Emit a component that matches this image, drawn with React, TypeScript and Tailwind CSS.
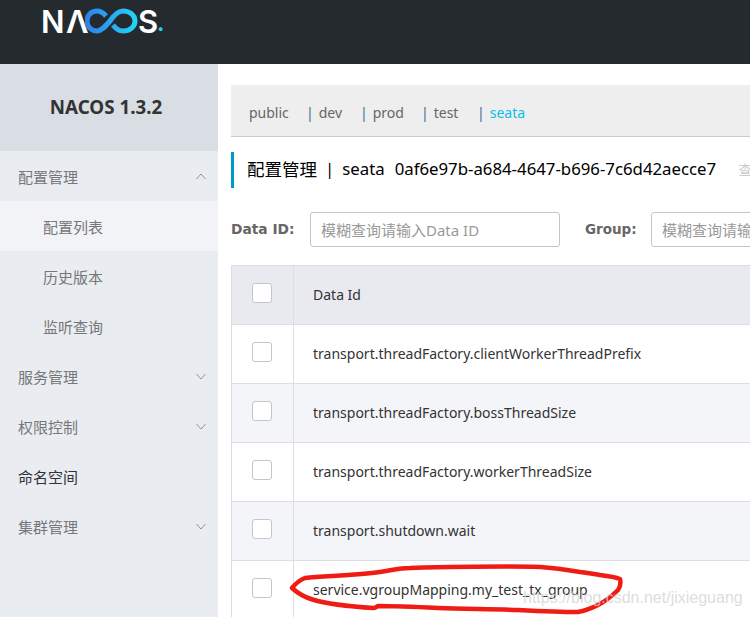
const latin = "font-['Noto_Sans','Noto_Sans_CJK_SC',sans-serif]";

const menu = [
  { label: "服务管理", arrow: true },
  { label: "权限控制", arrow: true },
  { label: "命名空间", arrow: false },
  { label: "集群管理", arrow: true },
];

const subMenu = ["配置列表", "历史版本", "监听查询"];

const tabs = [
  { name: "public", w: "w-[57px]" },
  { name: "dev", w: "w-[54px]" },
  { name: "prod", w: "w-[61px]" },
  { name: "test", w: "w-[56px]" },
];

const rows = [
  "transport.threadFactory.clientWorkerThreadPrefix",
  "transport.threadFactory.bossThreadSize",
  "transport.threadFactory.workerThreadSize",
  "transport.shutdown.wait",
  "service.vgroupMapping.my_test_tx_group",
];

const Chevron = ({ up = false }: { up?: boolean }) => (
  <svg width="10" height="7" viewBox="0 0 10 7" fill="none" stroke="#8d939b" strokeWidth="1" className="mb-[2px]">
    <path d={up ? "M.5 6L5 1l4.500 5" : "M.5 1L5 6l4.500-5"} />
  </svg>
);

const Logo = () => (
  <div className="flex items-center h-[24px] text-white font-['Inter',sans-serif] font-semibold text-[31px] leading-none">
    <span className="w-[25px]">N</span>
    <span className="w-[19px]">Λ</span>
    <svg width="53" height="26" viewBox="0 0 53 26" fill="none" strokeWidth="5" className="shrink-0">
      <defs>
        <linearGradient id="nacos-loop" x1="0" x2="1" y1="0" y2="0">
          <stop offset="0" stopColor="#2f80ed" />
          <stop offset="1" stopColor="#22d3f5" />
        </linearGradient>
      </defs>
      <path
        d="M21 8C18 4.500 15 3 12 3 6 3 2 7.500 2 13s4 10 10 10c4 0 7-3 13-10 4-6 8-10 13-10 7 0 12 4.500 12 10s-5 10-12 10c-4 0-7-2-10-6"
        stroke="url(#nacos-loop)"
        strokeLinecap="butt"
      />
    </svg>
    <span className="w-[19px]">S</span>
    <span className="text-[#22d3f5] text-[22px] self-end -mb-[1px] font-bold">.</span>
  </div>
);

const Sidebar = () => (
  <aside className="w-[218px] shrink-0 bg-[#e9ecf1] font-['Noto_Sans_CJK_SC',sans-serif] text-[15px]">
    <div className="h-[87px] bg-[#d9dde4] flex items-center justify-center pr-[6px] font-['Noto_Sans',sans-serif] font-bold text-[18.8px] text-[#333]">
      NACOS 1.3.2
    </div>
    <div className="h-[50px] pl-[18px] pr-[12px] pt-[2px] flex items-center justify-between text-[#777]">
      <span>配置管理</span>
      <Chevron up />
    </div>
    {subMenu.map((s, i) => (
      <div
        key={s}
        className={`h-[50px] pl-[43px] pt-[2px] flex items-center text-[#777] ${i === 0 ? "bg-[#f2f3f7]" : ""}`}
      >
        {s}
      </div>
    ))}
    {menu.map((m) => (
      <div
        key={m.label}
        className={`h-[50px] pl-[18px] pr-[12px] pt-[2px] flex items-center justify-between ${m.arrow ? "text-[#777]" : "text-[#333]"}`}
      >
        <span>{m.label}</span>
        {m.arrow && <Chevron />}
      </div>
    ))}
  </aside>
);

const Checkbox = () => (
  <span className="block w-5 h-5 rounded-[3px] bg-white border border-[#c4c6cf]" />
);

export default function App() {
  return (
    <div className={`w-[750px] h-[617px] overflow-hidden flex flex-col bg-white ${latin}`}>
      <header className="h-16 shrink-0 bg-[#252a2f] pl-[41px] pt-[9px]">
        <Logo />
      </header>

      <div className="flex flex-1 min-h-0">
        <Sidebar />

        <main className="relative w-[532px] overflow-hidden pl-[13px] pt-[21px]">
          <div className="w-[600px] h-[52px] bg-[#eeeeee] border-b border-[#cccccc] pl-[18px] pt-[4px] flex items-center text-[14px] text-[#666]">
            {tabs.map((t, i) => (
              <span key={t.name} className={`${t.w} shrink-0`}>
                {i > 0 && <span className="text-[#3a6a94] mr-[5px]">|</span>}
                {t.name}
              </span>
            ))}
            <span>
              <span className="text-[#3a6a94] mr-[5px]">|</span>
              <span className="text-[#09c0e6]">seata</span>
            </span>
          </div>

          <div className="mt-[15px] h-[36px] w-[600px] border-l-[3px] border-[#0099cc] pl-[13px] pb-[2px] flex items-center whitespace-nowrap text-[16.8px] text-black">
            <span className="text-[17.5px]">配置管理</span>
            <span className="mx-[8px]">|</span>
            <span>seata</span>
            <span className="ml-[10px]">0af6e97b-a684-4647-b696-7c6d42aecce7</span>
            <span className="ml-[22px] text-[14px] text-[#ccc]">查询</span>
          </div>

          <div className="mt-[24px] h-[35px] flex items-center w-[600px] text-[15px]">
            <span className="w-[79px] shrink-0 font-['DejaVu_Sans',sans-serif] font-bold text-[13.8px] text-[#666]">Data ID:</span>
            <div className="w-[250px] h-[35px] shrink-0 rounded-[3px] border border-[#c4c6cf] px-[10px] pt-[1px] flex items-center text-[#999]">
              模糊查询请输入Data ID
            </div>
            <span className="ml-[25px] w-[66px] shrink-0 font-['DejaVu_Sans',sans-serif] font-bold text-[13.5px] text-[#666]">Group:</span>
            <div className="w-[250px] h-[35px] shrink-0 rounded-[3px] border border-[#c4c6cf] px-[10px] pt-[1px] flex items-center text-[#999] whitespace-nowrap">
              模糊查询请输入Group
            </div>
          </div>

          <div className="mt-[18px] w-[600px] border-t border-l border-[#dcdee3] text-[14px] text-[#333]">
            <div className="h-[59px] flex bg-[#e9eaef] border-b border-[#dcdee3]">
              <div className="w-[62px] shrink-0 border-r border-[#dcdee3] flex items-center justify-center pb-[4px] pr-[2px]">
                <Checkbox />
              </div>
              <div className="pl-[19px] pb-[2px] flex items-center">Data Id</div>
            </div>
            {rows.map((r, i) => (
              <div
                key={r}
                className={`h-[59px] flex border-b border-[#dcdee3] ${i % 2 === 1 ? "bg-[#f4f5f8]" : "bg-white"}`}
              >
                <div className="w-[62px] shrink-0 border-r border-[#dcdee3] flex items-center justify-center pb-[4px] pr-[2px]">
                  <Checkbox />
                </div>
                <div className="pl-[19px] pb-[2px] flex items-center">{r}</div>
              </div>
            ))}
          </div>

          {/* red marker scribble around the last row */}
          <svg
            className="absolute left-[70px] top-[500px]"
            width="340"
            height="53"
            viewBox="0 0 340 53"
            fill="none"
            stroke="#f01c14"
            strokeWidth="4.500"
            strokeLinejoin="round"
          >
            <path d="M4 24C8 19 12 16 17 14 40 12 70 11 92 8 105 6 112 4 122 4c40-1 90-2 130-1 15 1 28 3 40 5 8 1 14 2 20 3 8 1 15 2 20 4 1 4 0 8-2 11-6 6-12 11-20 15-8 4-14 6-20 7-20 0-40-1-60-2-27-1-55-1-80-2-20-1-40-2-60-2-2 1-3 2-4 2C20 40 12 31 4 24Z" />
          </svg>

          {/* blog watermark */}
          <span className="absolute left-[305px] top-[526px] text-[16px] leading-none text-[#d4d4d4]/80 font-['Liberation_Sans',sans-serif] whitespace-nowrap">
            https://blog.csdn.net/jixieguang
          </span>
        </main>
      </div>
    </div>
  );
}
